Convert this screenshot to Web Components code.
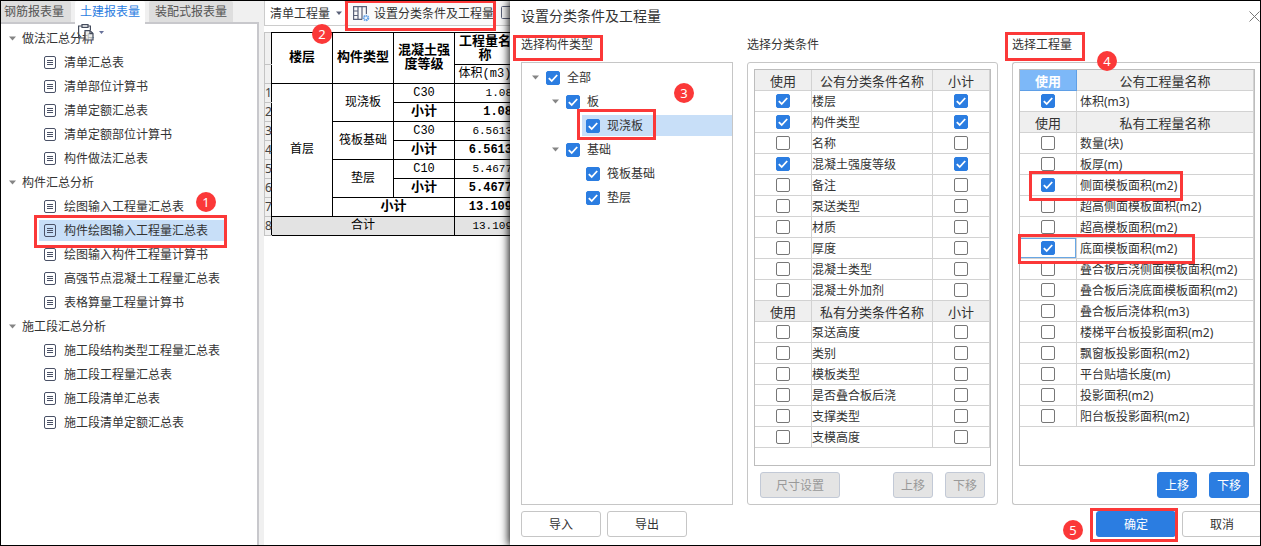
<!DOCTYPE html>
<html lang="zh-CN">
<head>
<meta charset="utf-8">
<title>设置分类条件及工程量</title>
<style>
html, body { margin: 0; }
body {
  font: 12px/16px "Noto Sans", "Noto Sans CJK SC", sans-serif;
  color: #333;
  --blue: #2b7de1;
  --line: #c6c6c6;
  --pick: #c8dff8;
  --alert: #fb3838;
}
</style>
</head>
<body>
<app-window>
  <side-nav slot="side">
    <nav-group label="做法汇总分析">
      <nav-item>清单汇总表</nav-item>
      <nav-item>清单部位计算书</nav-item>
      <nav-item>清单定额汇总表</nav-item>
      <nav-item>清单定额部位计算书</nav-item>
      <nav-item>构件做法汇总表</nav-item>
    </nav-group>
    <nav-group label="构件汇总分析">
      <nav-item>绘图输入工程量汇总表</nav-item>
      <nav-item selected>构件绘图输入工程量汇总表
        <hint-frame slot="hint" style="inset:-5px -3px -7px -5px"></hint-frame>
        <hint-badge slot="hint" style="left:157px;top:-28px">1</hint-badge>
      </nav-item>
      <nav-item>绘图输入构件工程量计算书</nav-item>
      <nav-item>高强节点混凝土工程量汇总表</nav-item>
      <nav-item>表格算量工程量计算书</nav-item>
    </nav-group>
    <nav-group label="施工段汇总分析">
      <nav-item>施工段结构类型工程量汇总表</nav-item>
      <nav-item>施工段工程量汇总表</nav-item>
      <nav-item>施工段清单汇总表</nav-item>
      <nav-item>施工段清单定额汇总表</nav-item>
    </nav-group>
  </side-nav>

  <report-view slot="report"></report-view>

  <settings-dialog slot="dialog" heading="设置分类条件及工程量">
    <field-panel label="选择构件类型" plain>
      <hint-frame slot="hint" style="left:-8px;top:4px;width:90px;height:26px"></hint-frame>
      <hint-badge slot="hint" style="left:153px;top:52px">3</hint-badge>
      <check-node level="0" open>全部</check-node>
      <check-node level="1" open>板</check-node>
      <check-node level="2" selected>现浇板
        <hint-frame slot="hint" style="left:-5px;top:-6px;width:79px;height:31px"></hint-frame>
      </check-node>
      <check-node level="1" open>基础</check-node>
      <check-node level="2">筏板基础</check-node>
      <check-node level="2">垫层</check-node>
    </field-panel>
    <field-panel label="选择分类条件">
      <check-table source="conditions"></check-table>
      <push-button slot="tools" disabled>尺寸设置</push-button>
      <push-button slot="tools" small disabled class="end">上移</push-button>
      <push-button slot="tools" small disabled>下移</push-button>
    </field-panel>
    <field-panel label="选择工程量" edge>
      <hint-frame slot="hint" style="left:-7px;top:1px;width:80px;height:29px"></hint-frame>
      <hint-badge slot="hint" style="left:85px;top:20px">4</hint-badge>
      <check-table source="quantities" roomy></check-table>
      <push-button slot="tools" small primary class="end">上移</push-button>
      <push-button slot="tools" small primary>下移</push-button>
    </field-panel>
    <push-button slot="actions">导入</push-button>
    <push-button slot="actions">导出</push-button>
    <push-button slot="confirm" primary>确定
      <hint-frame slot="hint" style="inset:-3px -2px -5px -6px"></hint-frame>
      <hint-badge slot="hint" style="left:-33px;top:9px">5</hint-badge>
    </push-button>
    <push-button slot="confirm">取消</push-button>
  </settings-dialog>
</app-window>

<script>
const BASE = `*, *::before { box-sizing: border-box; }
  button, input, select { font: inherit; color: inherit; margin: 0; }`;

const CHECK = `input[type=checkbox] {
    appearance: none; display: block; flex: none; width: 14px; height: 14px;
    border: 1px solid #777; border-radius: 2px; background: #fff;
  }
  input[type=checkbox]:checked {
    border-color: var(--blue);
    background: var(--blue) url("data:image/svg+xml,%3Csvg xmlns='http://www.w3.org/2000/svg' viewBox='0 0 12 12'%3E%3Cpath d='M1.8 6.2 4.7 9 10.2 3' fill='none' stroke='white' stroke-width='1.8'/%3E%3C/svg%3E") center / 12px 12px no-repeat;
  }`;

const ARROW = `<svg class="arrow" width="7" height="5" viewBox="0 0 7 5" aria-hidden="true"><path d="M0 .5h7L3.5 4.5z" fill="#858585"/></svg>`;

function define(name, html, setup) {
  const template = document.createElement('template');
  template.innerHTML = html;
  customElements.define(name, class extends HTMLElement {
    connectedCallback() {
      if (this.shadowRoot) return;
      const root = this.attachShadow({ mode: 'open' });
      root.append(template.content.cloneNode(true));
      if (setup) setup(this, root);
    }
  });
}

/* Outline and number used to point out the steps */
define('hint-frame', `<style>
  :host { position: absolute; z-index: 3; box-sizing: border-box; border: 3px solid var(--alert); pointer-events: none; }
</style>`);

define('hint-badge', `<style>
  :host { position: absolute; z-index: 4; width: 20px; height: 20px; border-radius: 50%;
    background: var(--alert); color: #fff; font-size: 13px; line-height: 20px; text-align: center; }
</style><slot></slot>`);

define('app-window', `<style>${BASE}
  :host { display: flex; box-sizing: border-box; min-height: 100vh; border: 1px solid #000; background: #f0f0f0; overflow: hidden; }
  .side { flex: 0 0 258px; display: flex; }
  .report { flex: 0 0 246px; min-width: 0; margin-left: 5px; display: flex; overflow: hidden; }
  .dialog { flex: 1; min-width: 0; display: flex; position: relative; z-index: 2; box-shadow: 0 0 9px 1px #000; }
  slot { display: contents; }
</style>
<aside class="side"><slot name="side"></slot></aside>
<main class="report"><slot name="report"></slot></main>
<section class="dialog"><slot name="dialog"></slot></section>`);

define('side-nav', `<style>${BASE}
  :host { flex: 1; display: flex; flex-direction: column; position: relative; }
  .tabs { display: flex; gap: 4px; height: 23px; border-bottom: 2px solid #c8c8cc; }
  .tabs button { border: 0; padding: 0 3px; height: 21px; width: 70px; background: #dedede; color: #555; white-space: nowrap; border-radius: 2px 2px 0 0; }
  .tabs button:first-child { text-align: left; }
  .tabs button:last-child { width: 84px; }
  .tabs button[aria-selected=true] { height: 23px; padding-bottom: 2px; background: #fff; color: var(--blue); }
  nav { flex: 1; background: #fff; border-right: 2px solid #c8c8cc; padding-top: 4px; }
  .paste { position: absolute; left: 76px; top: 22px; }
</style>
<div class="tabs" role="tablist">
  <button role="tab">钢筋报表量</button><button role="tab" aria-selected="true">土建报表量</button><button role="tab">装配式报表量</button>
</div>
<nav><slot></slot></nav>
<svg class="paste" width="28" height="18" viewBox="0 0 28 18" fill="none" stroke="#444b5c" stroke-width="1.2" aria-hidden="true">
  <path d="M5 3H1.6v12H7M11 3h2.4v4"/><path d="M5 1.6h6v2.8H5z" fill="#fff"/>
  <path d="M8 7.6h5l3 3V17H8z" fill="#e7e8e5" fill-opacity=".7"/><path d="M13 7.6v3h3"/>
  <path d="M22 8h5l-2.500 3z" fill="#67719a" stroke="none"/>
</svg>`);

define('nav-group', `<style>${BASE}
  :host { display: block; }
  .head { display: flex; align-items: center; gap: 6px; height: 21px; margin-bottom: 3px; padding-left: 8px; }
</style>
<div class="head">${ARROW}<span></span></div><slot></slot>`,
  (el, root) => { root.querySelector('span').textContent = el.getAttribute('label'); });

define('nav-item', `<style>${BASE}
  :host { display: block; position: relative; margin: 0 33px 3px 38px; height: 21px; }
  a { display: flex; align-items: center; gap: 8px; height: 21px; padding-left: 5px; color: inherit; text-decoration: none; white-space: nowrap; }
  :host([selected]) a { background: var(--pick); }
</style>
<a href="#"><svg width="12" height="13" viewBox="0 0 12 13" fill="none" stroke="#4a5166" aria-hidden="true"><rect x=".5" y=".5" width="11" height="12" rx="1.500"/><path d="M3 4.500h6M3 6.500h6M3 8.500h6"/></svg><span><slot></slot></span></a>
<slot name="hint"></slot>`);

define('report-view', `<style>${BASE}
  :host { flex: 1; min-width: 0; display: block; background: #fff; }
  .bar { position: relative; display: flex; align-items: center; height: 25px; margin-bottom: 6px; background: #fafafa; border-bottom: 1px solid #ccc; border-left: 1px solid #ccc; white-space: nowrap; }
  .pick { position: relative; flex: none; width: 81px; height: 24px; border-radius: 2px; border-right: 1px solid #ccc; background: #fff; }
  .pick svg { position: absolute; right: 3px; top: 10px; }
  select { appearance: none; display: block; border: 0; outline: 0; background: none; width: 100%; height: 24px; padding: 1px 0 0 5px; }
  .bar button { display: flex; align-items: center; gap: 4px; flex: none; border: 0; background: none; padding: 1px 1px 0 7px; height: 24px; }
  .bar .more { padding: 0; }
  .tool { position: relative; flex: none; margin-right: 6px; }
  table { table-layout: fixed; width: 251px; border-collapse: collapse; color: #000; }
  td, th { padding: 0; height: 19px; line-height: 14px; border: 1px solid #000; text-align: center; font-weight: 400; font-family: "Liberation Mono", "Noto Sans CJK SC", monospace; }
  thead tr:first-child { height: 32px; }
  thead th { font-size: 13px; font-weight: 700; }
  thead .sub { font-size: 12px; font-weight: 400; }
  .no { border-color: #c4c4c4 #000 #c4c4c4 #c4c4c4; background: #f0f0f0; color: #444; font: 12px/14px "Noto Sans", sans-serif; }
  b { font-size: 13px; }
  .num { text-align: right; padding-right: 3px; font-size: 11px; }
  .num b { font-size: 12px; }
  .sum td:not(.no) { background: #e3e3e3; }
</style>
<div class="bar">
  <div class="pick"><select aria-label="报表类型"><option>清单工程量</option></select><svg width="6" height="4" viewBox="0 0 6 4" aria-hidden="true"><path d="M0 .5h6L3 4z" fill="#5a6178"/></svg></div>
  <div class="tool"><button>
    <svg width="17" height="17" viewBox="0 0 17 17" fill="none" stroke="#5a6178" stroke-width="1.200" aria-hidden="true"><path d="M9 14.400H.6V1.600h12.800V9M5 1.600v12.800M9 1.600v12.800M.6 6H5M.6 10.500H5"/><circle cx="13" cy="13" r="2.200" stroke="#67a4e8" stroke-width="2.200" stroke-dasharray="1.300 .5"/></svg>
    <span>设置分类条件及工程量</span></button>
    <hint-frame style="inset:-1px -1px -6px -1px"></hint-frame></div>
  <button class="more" aria-label="更多"><svg width="14" height="14" viewBox="0 0 14 14" fill="none" stroke="#5a6178" aria-hidden="true"><rect x=".5" y=".5" width="13" height="12" rx="1"/></svg></button>
  <hint-badge style="left:47px;top:23px">2</hint-badge>
</div>
<table>
  <colgroup><col style="width:7px"><col span="4" style="width:61px"></colgroup>
  <thead>
    <tr><th class="no"></th><th rowspan="2">楼层</th><th rowspan="2">构件类型</th><th rowspan="2">混凝土强度等级</th><th>工程量名称</th></tr>
    <tr><th class="no"></th><th class="sub">体积(m3)</th></tr>
  </thead>
  <tbody>
    <tr><td class="no">1</td><td rowspan="7">首层</td><td rowspan="2">现浇板</td><td>C30</td><td class="num">1.08</td></tr>
    <tr><td class="no">2</td><td><b>小计</b></td><td class="num"><b>1.08</b></td></tr>
    <tr><td class="no">3</td><td rowspan="2">筏板基础</td><td>C30</td><td class="num">6.5613</td></tr>
    <tr><td class="no">4</td><td><b>小计</b></td><td class="num"><b>6.5613</b></td></tr>
    <tr><td class="no">5</td><td rowspan="2">垫层</td><td>C10</td><td class="num">5.4677</td></tr>
    <tr><td class="no">6</td><td><b>小计</b></td><td class="num"><b>5.4677</b></td></tr>
    <tr><td class="no">7</td><td colspan="2"><b>小计</b></td><td class="num"><b>13.109</b></td></tr>
    <tr class="sum"><td class="no">8</td><td colspan="3">合计</td><td class="num">13.109</td></tr>
  </tbody>
</table>`);

define('settings-dialog', `<style>${BASE}
  :host { flex: 1; min-width: 0; display: flex; flex-direction: column; background: #fff; padding: 0 0 8px 11px; overflow: hidden; }
  header { display: flex; align-items: center; justify-content: space-between; height: 30px; }
  h1 { margin: 0; font-size: 14px; font-weight: 400; line-height: 20px; }
  header button { display: flex; border: 0; padding: 0; background: none; }
  .body { flex: 1; display: grid; grid-template-columns: 212fr 251fr 248fr; gap: 14px; }
  footer { display: flex; gap: 6px; margin: 6px -2px 0 0; }
  .right { display: flex; gap: 6px; margin-left: auto; }
</style>
<header><h1></h1><button aria-label="关闭"><svg width="11" height="11" viewBox="0 0 11 11" stroke="#777" aria-hidden="true"><path d="M.5.5l10 10M10.500.5l-10 10"/></svg></button></header>
<div class="body"><slot></slot></div>
<footer><slot name="actions"></slot><div class="right"><slot name="confirm"></slot></div></footer>`,
  (el, root) => { root.querySelector('h1').textContent = el.getAttribute('heading'); });

define('field-panel', `<style>${BASE}
  :host { position: relative; min-width: 0; display: flex; flex-direction: column; }
  h2 { margin: 0 0 3px; height: 28px; font-size: 12px; line-height: 28px; font-weight: 400; }
  .box { flex: 1; display: flex; flex-direction: column; gap: 6px; padding: 6px; border: 1px solid var(--line); border-radius: 3px; }
  .main { flex: 1; display: flex; flex-direction: column; }
  .tools { display: flex; gap: 12px; padding: 0 6px; }
  ::slotted(.end) { margin-left: auto; }
  :host([plain]) .box { padding: 3px 0 0; border-radius: 0; }
  :host([plain]) .tools { display: none; }
  :host([edge]) .box { border-right: 0; border-radius: 3px 0 0 3px; padding-right: 5px; }
</style>
<h2></h2><div class="box"><div class="main"><slot></slot></div><div class="tools"><slot name="tools"></slot></div></div>
<slot name="hint"></slot>`,
  (el, root) => { root.querySelector('h2').textContent = el.getAttribute('label'); });

define('check-node', `<style>${BASE}${CHECK}
  :host { display: flex; align-items: center; height: 21px; margin: 1px 0 2px; }
  :host([level="1"]) { padding-left: 20px; }
  :host([level="2"]) { padding-left: 40px; }
  .twist { flex: 0 0 20px; display: flex; padding-left: 10px; }
  :host(:not([open])) .arrow { display: none; }
  .cell { flex: 1; position: relative; height: 21px; }
  label { display: flex; align-items: center; gap: 7px; height: 21px; padding-left: 4px; }
  :host([selected]) .cell { background: var(--pick); }
</style>
<span class="twist">${ARROW}</span>
<div class="cell"><label><input type="checkbox" checked><span><slot></slot></span></label><slot name="hint"></slot></div>`);

define('push-button', `<style>${BASE}
  :host { display: block; position: relative; flex: none; width: 80px; }
  :host([small]) { width: 40px; }
  button { display: block; width: 100%; height: 26px; padding: 2px 0 0; border: 1px solid var(--line); border-radius: 3px; background: #fff; text-align: center; white-space: nowrap; }
  :host([primary]) button { background: var(--blue); border-color: var(--blue); color: #fff; }
  :host([disabled]) button { background: #e4e4e4; border-color: #c2c9d6; color: #999; }
</style>
<button><slot></slot></button><slot name="hint"></slot>`,
  (el, root) => { root.querySelector('button').disabled = el.hasAttribute('disabled'); });

/* h: heading row, on: ticked, hint: [left, width] of a frame over the row */
const TABLES = {
  conditions: [
    { h: ['使用', '公有分类条件名称', '小计'] },
    { name: '楼层', on: 1 }, { name: '构件类型', on: 1 }, { name: '名称' }, { name: '混凝土强度等级', on: 1 },
    { name: '备注' }, { name: '泵送类型' }, { name: '材质' }, { name: '厚度' }, { name: '混凝土类型' }, { name: '混凝土外加剂' },
    { h: ['使用', '私有分类条件名称', '小计'] },
    { name: '泵送高度' }, { name: '类别' }, { name: '模板类型' }, { name: '是否叠合板后浇' }, { name: '支撑类型' }, { name: '支模高度' }
  ],
  quantities: [
    { h: ['使用', '公有工程量名称'], active: 1 },
    { name: '体积(m3)', on: 1 },
    { h: ['使用', '私有工程量名称'] },
    { name: '数量(块)' }, { name: '板厚(m)' },
    { name: '侧面模板面积(m2)', on: 1, hint: [9, 154] },
    { name: '超高侧面模板面积(m2)' }, { name: '超高模板面积(m2)' },
    { name: '底面模板面积(m2)', on: 1, focus: 1, hint: [-2, 177] },
    { name: '叠合板后浇侧面模板面积(m2)' }, { name: '叠合板后浇底面模板面积(m2)' }, { name: '叠合板后浇体积(m3)' },
    { name: '楼梯平台板投影面积(m2)' }, { name: '飘窗板投影面积(m2)' }, { name: '平台贴墙长度(m)' },
    { name: '投影面积(m2)' }, { name: '阳台板投影面积(m2)' }
  ]
};

define('check-table', `<style>${BASE}${CHECK}
  :host { flex: 1; display: block; border: 1px solid #bdbdbd; }
  table { width: 100%; table-layout: fixed; border-collapse: separate; border-spacing: 0; }
  td, th { position: relative; height: 21px; padding: 0; line-height: 16px; border: solid #d2d2d2; border-width: 0 1px 1px 0; white-space: nowrap; }
  th { padding-top: 2px; background: #efefef; font-size: 13px; font-weight: 400; }
  td input { margin: 0 auto; }
  td.name { padding: 2px 0 0; }
  :host([roomy]) td.name { padding-left: 3px; }
  .tick { width: 57px; }
  th.active { background: #7db8f8; border-color: #5f9fe6; color: #fff; font-weight: 700; }
  td.focus { box-shadow: inset 0 0 0 1px #69a7e4; }
</style><table></table>`,
  (el, root) => {
    const rows = TABLES[el.getAttribute('source')];
    const wide = rows[0].h.length === 3;
    const box = (r, what) => `<input type="checkbox" aria-label="${r.name} ${what}"${r.on ? ' checked' : ''}>`;
    root.querySelector('table').innerHTML =
      `<colgroup><col class="tick"><col>${wide ? '<col class="tick">' : ''}</colgroup>` +
      rows.map(r => {
        if (r.h) return `<tr>${r.h.map((t, i) => `<th${r.active && !i ? ' class="active"' : ''}>${t}</th>`).join('')}</tr>`;
        const frame = r.hint ? `<hint-frame style="top:-4px;height:30px;left:${r.hint[0]}px;width:${r.hint[1]}px"></hint-frame>` : '';
        return `<tr><td${r.focus ? ' class="focus"' : ''}>${box(r, '使用')}${frame}</td><td class="name">${r.name}</td>${wide ? `<td>${box(r, '小计')}</td>` : ''}</tr>`;
      }).join('');
  });
</script>
</body>
</html>
